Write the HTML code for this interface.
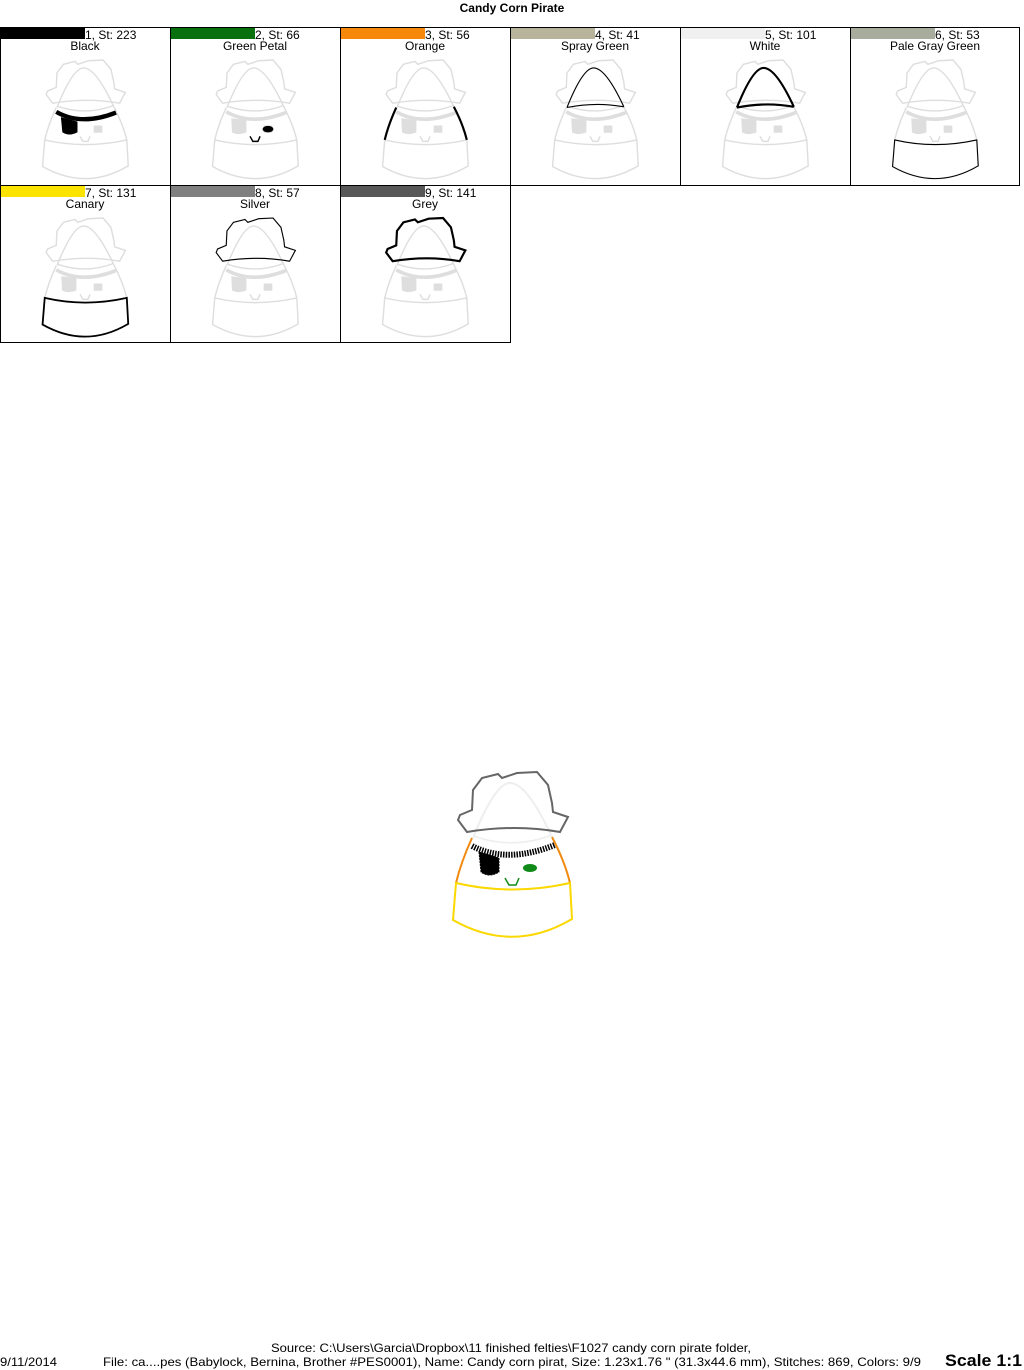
<!DOCTYPE html>
<html><head><meta charset="utf-8"><style>
html,body{margin:0;padding:0;background:#fff;}
svg{display:block;font-family:"Liberation Sans",sans-serif;}
</style></head><body>
<svg width="1024" height="1370" viewBox="0 0 1024 1370" xmlns="http://www.w3.org/2000/svg">
<defs>
<path id="hat" d="M3,48 L5,43 L17,38 L18,18 L27,6 L43,2 L47,6 L62,1 L82,0 L93,13 L97,31 L98,40 L113,45 L105,60 Q60,52 12,60 Z"/>
<path id="cone" d="M18,66 Q40,11 55,11 Q72,11 97,65"/>
<path id="btop" d="M18,64 Q58,78 97,63"/>
<path id="sideL" d="M17,66 Q6,90 1,111"/>
<path id="sideR" d="M97,65 Q110,90 115,111"/>
<path id="band" d="M1,111 Q57,124 115,111 L117,147 Q58,182 -2,148 Z"/>
<path id="eye" d="M68,96 a7,4 0 1,0 14,0 a7,4 0 1,0 -14,0"/>
<path id="smile" d="M50,106 L54,113 L61,113 L64,106"/>
<g id="ghost" fill="none" stroke="#dedede" stroke-width="2">
<use href="#hat"/><use href="#cone"/><use href="#btop"/><use href="#sideL"/><use href="#sideR"/><use href="#band"/>
<path d="M17,72 Q52,92 100,73" stroke-width="5"/><path d="M25,82 L44,84 L44,100 Q34,104 26,100 Z" fill="#dedede"/>
<use href="#smile"/><path d="M70,92 h10 v8 h-10z" fill="#dedede"/>
</g>
</defs>
<text x="512" y="12" text-anchor="middle" font-size="12" font-weight="bold">Candy Corn Pirate</text>

<g stroke="#000" stroke-width="1" fill="none">
<rect x="0.5" y="27.5" width="1019" height="158"/>
<line x1="170.5" y1="27" x2="170.5" y2="343"/><line x1="340.5" y1="27" x2="340.5" y2="343"/>
<line x1="510.5" y1="27" x2="510.5" y2="343"/><line x1="680.5" y1="27" x2="680.5" y2="185"/><line x1="850.5" y1="27" x2="850.5" y2="185"/>
<path d="M0.5,185 V342.5 H510.5"/>
</g>

<g font-size="12">
<rect x="1" y="28" width="84" height="11" fill="#000"/><text x="85" y="39">1, St: 223</text><text x="85" y="50" text-anchor="middle">Black</text>
<rect x="171" y="28" width="84" height="11" fill="#08700c"/><text x="255" y="39">2, St: 66</text><text x="255" y="50" text-anchor="middle">Green Petal</text>
<rect x="341" y="28" width="84" height="11" fill="#f6880c"/><text x="425" y="39">3, St: 56</text><text x="425" y="50" text-anchor="middle">Orange</text>
<rect x="511" y="28" width="84" height="11" fill="#b8b49c"/><text x="595" y="39">4, St: 41</text><text x="595" y="50" text-anchor="middle">Spray Green</text>
<rect x="681" y="28" width="84" height="11" fill="#f0f0f0"/><text x="765" y="39">5, St: 101</text><text x="765" y="50" text-anchor="middle">White</text>
<rect x="851" y="28" width="84" height="11" fill="#a8ac9c"/><text x="935" y="39">6, St: 53</text><text x="935" y="50" text-anchor="middle">Pale Gray Green</text>
<rect x="1" y="186" width="84" height="11" fill="#fde400"/><text x="85" y="197">7, St: 131</text><text x="85" y="208" text-anchor="middle">Canary</text>
<rect x="171" y="186" width="84" height="11" fill="#808080"/><text x="255" y="197">8, St: 57</text><text x="255" y="208" text-anchor="middle">Silver</text>
<rect x="341" y="186" width="84" height="11" fill="#585858"/><text x="425" y="197">9, St: 141</text><text x="425" y="208" text-anchor="middle">Grey</text>
</g>

<g fill="none" stroke="#000">
<g transform="translate(44,60) scale(0.72)"><use href="#ghost"/><path d="M17,72 Q52,92 100,73" stroke-width="6"/><path d="M24,80 L46,86 L46,100 Q34,106 26,100 Z" fill="#000"/></g>
<g transform="translate(214,60) scale(0.72)"><use href="#ghost"/><use href="#eye" fill="#000"/><use href="#smile" stroke-width="2"/></g>
<g transform="translate(384,60) scale(0.72)"><use href="#ghost"/><use href="#sideL" stroke-width="3"/><use href="#sideR" stroke-width="3"/></g>
<g transform="translate(554,60) scale(0.72)"><use href="#ghost"/><use href="#cone" stroke-width="1.5"/><path d="M18,66 Q58,58 97,65" stroke-width="1.5"/></g>
<g transform="translate(724,60) scale(0.72)"><use href="#ghost"/><use href="#cone" stroke-width="3"/><path d="M18,66 Q58,58 97,65" stroke-width="3"/></g>
<g transform="translate(894,60) scale(0.72)"><use href="#ghost"/><use href="#band" stroke-width="1.5"/></g>
<g transform="translate(44,218) scale(0.72)"><use href="#ghost"/><use href="#band" stroke-width="2.5"/></g>
<g transform="translate(214,218) scale(0.72)"><use href="#ghost"/><use href="#hat" stroke-width="1.5"/></g>
<g transform="translate(384,218) scale(0.72)"><use href="#ghost"/><use href="#hat" stroke-width="3"/></g>
</g>

<g transform="translate(455,772)" fill="none">
<use href="#cone" stroke="#eeeeee" stroke-width="2"/>
<use href="#btop" stroke="#eeeeee" stroke-width="1.5"/>
<use href="#hat" stroke="#666" stroke-width="2"/>
<use href="#sideL" stroke="#f08a10" stroke-width="2"/><use href="#sideR" stroke="#f08a10" stroke-width="2"/>
<use href="#band" stroke="#fbd800" stroke-width="2"/>
<path d="M17,74 Q52,92 100,73" stroke="#000" stroke-width="6" stroke-dasharray="1.5 1.2"/>
<path d="M24,80 L44,86 L44,100 Q34,106 26,100 Z" fill="#000" stroke="#000" stroke-dasharray="2 1"/>
<use href="#eye" fill="#108a18"/>
<use href="#smile" stroke="#108a18" stroke-width="1.5"/>
</g>

<g font-size="12">
<text x="271" y="1352" textLength="480" lengthAdjust="spacingAndGlyphs">Source: C:\Users\Garcia\Dropbox\11 finished felties\F1027 candy corn pirate folder,</text>
<text x="0" y="1366" textLength="57" lengthAdjust="spacingAndGlyphs">9/11/2014</text>
<text x="103" y="1366" textLength="818" lengthAdjust="spacingAndGlyphs">File: ca....pes (Babylock, Bernina, Brother #PES0001), Name: Candy corn pirat, Size: 1.23x1.76 " (31.3x44.6 mm), Stitches: 869, Colors: 9/9</text>
<text x="945" y="1366" font-size="17" font-weight="bold" textLength="77" lengthAdjust="spacingAndGlyphs">Scale 1:1</text>
</g>
</svg>
</body></html>
